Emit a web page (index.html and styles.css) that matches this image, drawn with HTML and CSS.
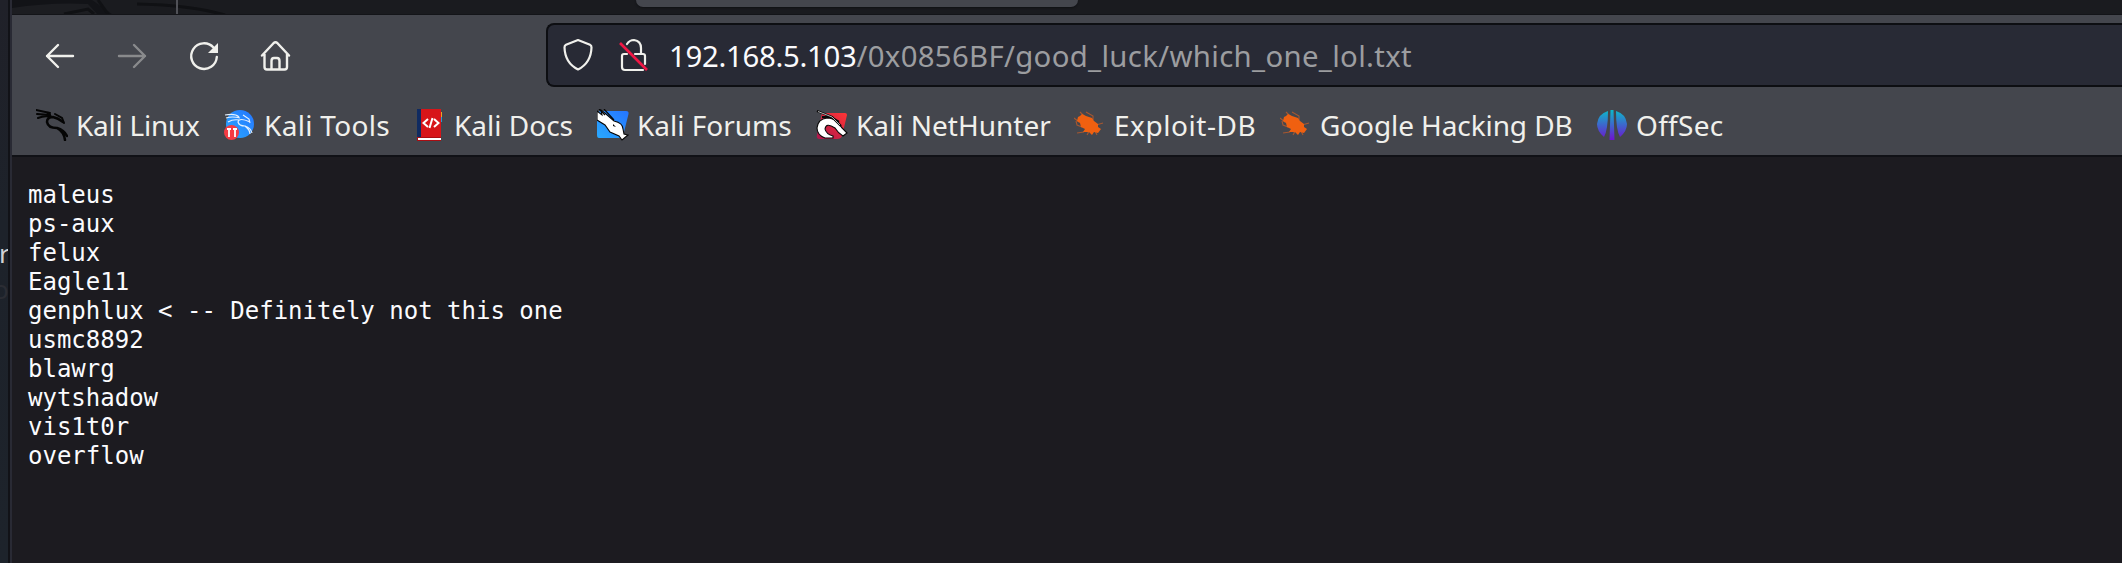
FILE: index.html
```html
<!DOCTYPE html>
<html lang="en">
<head>
<meta charset="utf-8">
<title>which_one_lol.txt</title>
<link rel="stylesheet" href="styles.css">
</head>
<body>
<div class="desktop">
  <aside class="behind"><span class="behind-r">r</span><span class="behind-o">o</span></aside>
  <main class="window">
    <div class="tabstrip">
      <svg class="wallpaper" width="240" height="14" viewBox="12 0 240 14"><path d="M12 0H92L112 14H12Z" fill="#121317"/><path d="M12 8Q50 2 88 4L97 14H12Z" fill="#1c1d21"/><path d="M64 14L88 9L94 14M98 0L108 14M137 4Q190 5 225 15" fill="none" stroke="#101114" stroke-width="3"/><path d="M177 0V14" stroke="#505157" stroke-width="2"/></svg>
      <div class="tab"></div>
    </div>
    <nav class="toolbar">
      <div class="buttons">
        <svg width="32" height="32" viewBox="0 0 32 32"><path d="M29 16H3M14 5L3 16L14 27" class="line"/></svg>
        <svg class="disabled" width="32" height="32" viewBox="0 0 32 32"><path d="M3 16H29M18 5L29 16L18 27" class="line"/></svg>
        <svg width="32" height="32" viewBox="0 0 32 32"><path d="M25.500 7.500A12.800 12.800 0 1 0 28.800 17" class="line"/><path d="M30 3V13H20Z" fill="#f0f0ec"/></svg>
        <svg width="32" height="32" viewBox="0 0 32 32"><path d="M2 15.500L13.500 3.200Q15.500 1.400 17.500 3.200L29 15.500M4.500 14V27Q4.500 29.500 7 29.500H24.500Q27 29.500 27 27V14M11.500 29V21Q11.500 18 14 18H17Q19.500 18 19.500 21V29" class="line"/></svg>
      </div>
      <div class="urlbar">
        <svg width="32" height="34" viewBox="0 0 32 34"><path d="M16 2L28 6.700Q29.600 7.400 29.500 9.500Q29 25 16 31.500Q3 25 2.500 9.500Q2.400 7.400 4 6.700Z" class="line thin"/></svg>
        <svg class="lock" width="32" height="34" viewBox="0 0 32 34"><path d="M10 6Q12.500 2 17 2Q24 3 24 10V16M10 16H7Q5 16 5 18V29Q5 32 8 32H26M18 16H26Q28 16 28 18V26" class="line thin"/><path d="M3 5L30 32" stroke="#f01745" stroke-width="2.700"/></svg>
        <span class="url"><span class="host">192.168.5.103</span>/0x0856BF/good_luck/which_one_lol.txt</span>
      </div>
    </nav>
    <div class="bookmarks">
      <a class="bookmark"><svg width="32" height="32" viewBox="0 0 32 32" fill="none" stroke="#050505" stroke-linecap="round"><path d="M0 1L14 4M1 5L14 6M2 9Q9 6 15 8M19 5L26 9L28 14" stroke-width="2"/><path d="M27 13Q22 9 17 8Q11 8 11 13Q12 19 21 19Q28 21 31 27M21 19Q28 23 29 31M12 4L15 8" stroke-width="2.500"/></svg><span class="tight">Kali Linux</span></a>
      <a class="bookmark"><svg width="32" height="32" viewBox="0 0 32 32"><defs><linearGradient id="blue" x1="1" y1="0" x2="0" y2="1"><stop stop-color="#2575ff"/><stop offset="1" stop-color="#29a9ff"/></linearGradient></defs><circle cx="16" cy="15" r="14" fill="url(#blue)"/><path d="M1 6Q11 4 15 8M2 9Q8 7 16 9M4 13Q9 10 15 11M19 6L25 10L26 14M26 13Q15 8 14 13Q15 17 21 17Q27 19 28 24M21 17Q26 21 26 25" fill="none" stroke="#e5f1ff" stroke-width="1.200"/><circle cx="7.500" cy="23.500" r="7.500" fill="#f53b43"/><path d="M3 20H7M5 20V28M9 20H13M11 20V28" fill="none" stroke="#fff" stroke-width="1.800"/></svg><span class="wide">Kali Tools</span></a>
      <a class="bookmark"><svg width="32" height="32" viewBox="0 0 32 32"><path d="M3 0H8V31H3Z" fill="#102b61"/><path d="M7 0H27V29H7Z" fill="#d71519"/><path d="M27 3H28V8H27Z" fill="#e8a529"/><path d="M27 8H28V13H27Z" fill="#269bd5"/><path d="M3 28H27V32H3Z" fill="#a90d12"/><path d="M4 30H27" stroke="#fff" stroke-width="2"/><path d="M14 10L9.500 14L14 18M20 10L24.500 14L20 18M18.500 9L15.500 19" stroke="#fff" stroke-width="2" fill="none"/></svg><span>Kali Docs</span></a>
      <a class="bookmark"><svg width="32" height="32" viewBox="0 0 32 32"><path d="M3 2H29Q32 2 31.500 5L26 27Q25 29 23 29H2Q0 29 0 26V4Z" fill="url(#blue)"/><path d="M0 2L5 6L4 1L9 5L17 12Q26 14 26 20L27 25L31 26L25 31L22 27L13 23L8 16L0 11Z" fill="#fff" stroke="#080808" stroke-width="1.100"/><path d="M2 0L8 6M7 0L17 11" stroke="#080808" stroke-width="1.200"/><path d="M16 15L19 18L16 17Z"/></svg><span>Kali Forums</span></a>
      <a class="bookmark"><svg width="32" height="32" viewBox="0 0 32 32"><defs><linearGradient id="red" x1="1" y1="0" x2="0" y2="1"><stop stop-color="#ff3535"/><stop offset="1" stop-color="#ad164d"/></linearGradient></defs><path d="M6 4H29Q31 4 31 6L26 27Q25 30 21 30H3Q0 29 1 26Z" fill="url(#red)"/><path d="M17 29H9Q1 26 1 19Q2 10 11 9Q17 9 22 13Q25 19 31 24L27 27Q22 24 19 19Q10 13 9 20Q10 25 17 27Z" fill="#fff" stroke="#080808" stroke-width="1.100"/><path d="M1 2L16 8L25 17M6 8L15 8L23 13" stroke="#080808" stroke-width="2.200" fill="none"/><path d="M2 2.500L16 8L24 16" stroke="#ddd" stroke-width=".8" fill="none"/></svg><span>Kali NetHunter</span></a>
      <a class="bookmark"><svg width="32" height="32" viewBox="0 0 32 32"><g id="bug"><path d="M6 3L11 8M12 3L19 7L19 11M0 9L5 13M22 16L29 14M2 12L3 16L8 18M10 23L3 24M13 23L16 21L13 26M21 22L23 26" stroke="#a65730" stroke-width="1.100" fill="none"/><path d="M4 8L6 7L8 5L12 7L18 9L20 12L24 15L24 18L27 20L24 24L20 23L18 26L15 23L9 23L11 20L7 18L6 14L3 12Z" fill="#f06010"/></g></svg><span class="wider">Exploit-DB</span></a>
      <a class="bookmark"><svg width="32" height="32" viewBox="0 0 32 32"><use href="#bug"/></svg><span class="snug">Google Hacking DB</span></a>
      <a class="bookmark"><svg width="32" height="32" viewBox="0 0 32 32"><defs><linearGradient id="violet" gradientUnits="userSpaceOnUse" x1="0" y1="1" x2="0" y2="31"><stop stop-color="#0bbac9"/><stop offset="1" stop-color="#7012d0"/></linearGradient></defs><path d="M12 2Q12 21 8 28Q1 22 1 15Q2 5 12 2ZM20 2Q20 21 24 28Q31 22 31 15Q30 5 20 2ZM14.500 1H17.500L18.500 31H13.500Z" fill="url(#violet)"/></svg><span class="wide">OffSec</span></a>
    </div>
    <pre class="document">maleus
ps-aux
felux
Eagle11
genphlux &lt; -- Definitely not this one
usmc8892
blawrg
wytshadow
vis1t0r
overflow</pre>
  </main>
</div>
</body>
</html>
```
FILE: styles.css
```css
* { box-sizing: border-box; }
body { margin: 0; background: #1c1b20; overflow: hidden; }
.desktop { display: flex; width: 2122px; height: 563px; }
.behind { width: 8px; flex: none; overflow: hidden; padding-top: 235px; background: linear-gradient(#202129, #1d222a 40%, #1d232b); color: #d0d1d3; font: 26px/36px "Noto Sans", sans-serif; display: flex; flex-direction: column; }
.behind-r { margin-left: -1px; }
.behind-o { color: #2b2d34; margin-left: -7px; }
.window { flex: 1; min-width: 0; border-left: 2px solid #111217; box-shadow: inset 2px 0 #292a34; padding-left: 2px; }
.tabstrip { height: 15px; background: #1a1b1f; border-bottom: 1px solid #131418; display: flex; }
.wallpaper { flex: none; margin-right: 384px; }
.tab { width: 442px; height: 7px; background: #44464d; border-radius: 0 0 8px 8px; box-shadow: 0 1px 2px #101114; }
.toolbar { height: 80px; background: #44464d; display: flex; padding: 8px 0 0 32px; }
.buttons { display: flex; gap: 40px; width: 502px; padding-top: 17px; }
.line { fill: none; stroke: #f0f0ec; stroke-width: 2.4; stroke-linecap: round; stroke-linejoin: round; }
.thin { stroke-width: 2.2; }
.disabled { opacity: .4; }
.urlbar { flex: 1; height: 64px; border: 2px solid #0d0e12; border-right: 0; border-radius: 8px 0 0 8px; background: #282a35; display: flex; align-items: center; padding-left: 14px; }
.urlbar svg { flex: none; }
.urlbar .lock { margin-left: 23px; }
.url { margin-left: 20px; padding-top: 2px; color: #9c9da0; font: 29.33px/60px "Noto Sans", sans-serif; letter-spacing: .33px; white-space: pre; }
.host { color: #fbfbfe; letter-spacing: -.3px; }
.bookmarks { height: 62px; background: #44464d; border-bottom: 2px solid #101116; display: grid; grid-template-columns: 188px 190px 183px 219px 258px 206px 316px 200px; padding: 0 0 0 24px; }
.bookmark { display: flex; align-items: center; gap: 8px; height: 60px; color: #f0f0ec; font: 28px/60px "Noto Sans", sans-serif; white-space: nowrap; }
.bookmark svg { flex: none; }
.tight { letter-spacing: -.25px; }
.snug { letter-spacing: -.1px; }
.wide { letter-spacing: .3px; }
.wider { letter-spacing: .55px; }
.document { margin: 0; padding: 24px 0 0 16px; color: #fbfbfe; font: 24px/29px "DejaVu Sans Mono", monospace; }
```
